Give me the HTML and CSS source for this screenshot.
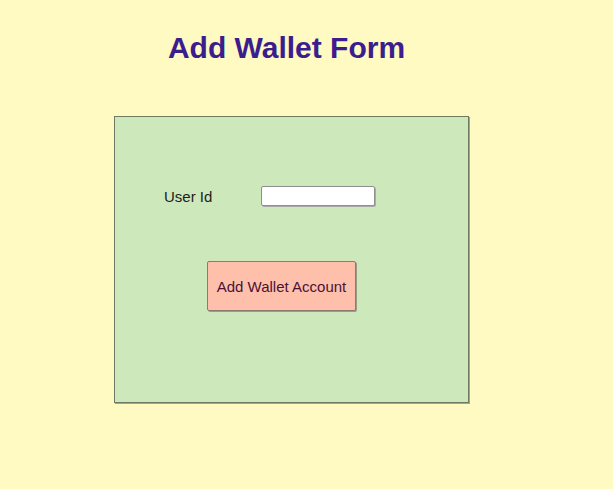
FILE: index.html
```html
<!DOCTYPE html>
<html>
<head>
<meta charset="utf-8">
<link rel="stylesheet" href="styles.css">
</head>
<body>
<div class="page">
  <h1 class="title">Add Wallet Form</h1>
  <form class="card">
    <div class="row">
      <label class="label" for="uid">User Id</label>
      <input class="input" id="uid" type="text">
    </div>
    <div class="actions">
      <button class="btn" type="button">Add Wallet Account</button>
    </div>
  </form>
</div>
</body>
</html>
```
FILE: styles.css
```css
html, body {
  margin: 0;
  padding: 0;
  background: #fff9c2;
  font-family: "Liberation Sans", Arial, sans-serif;
}
.page {
  padding: 8px;
}
.title {
  width: 557px;
  margin: 22px 0 0 0;
  text-align: center;
  font-size: 30px;
  font-weight: bold;
  color: #3b1d8e;
  line-height: 36px;
}
.card {
  box-sizing: border-box;
  width: 355px;
  height: 287px;
  margin: 50px 0 0 106px;
  background: #cde8bb;
  border: 1px solid #6f7a62;
  box-shadow: 1px 1px 0 #9aa88c;
  padding: 69px 0 0 49px;
}
.row {
  display: flex;
  align-items: center;
  height: 20px;
}
.label {
  width: 97px;
  font-size: 15px;
  color: #1d1d1d;
}
.input {
  box-sizing: border-box;
  width: 114px;
  height: 20px;
  margin: 0;
  border: 1px solid #8f8f8f;
  border-radius: 2px;
  background: #fff;
  box-shadow: 1px 1px 0 #a9a9a9;
}
.actions {
  margin: 55px 0 0 43px;
}
.btn {
  box-sizing: border-box;
  width: 149px;
  height: 50px;
  background: #ffc0ab;
  border: 1px solid #8b7b73;
  border-radius: 2px;
  box-shadow: 1px 1px 0 #9b9b8b;
  font-family: "Liberation Sans", Arial, sans-serif;
  font-size: 15px;
  color: #4a1236;
  padding: 0;
}
```
